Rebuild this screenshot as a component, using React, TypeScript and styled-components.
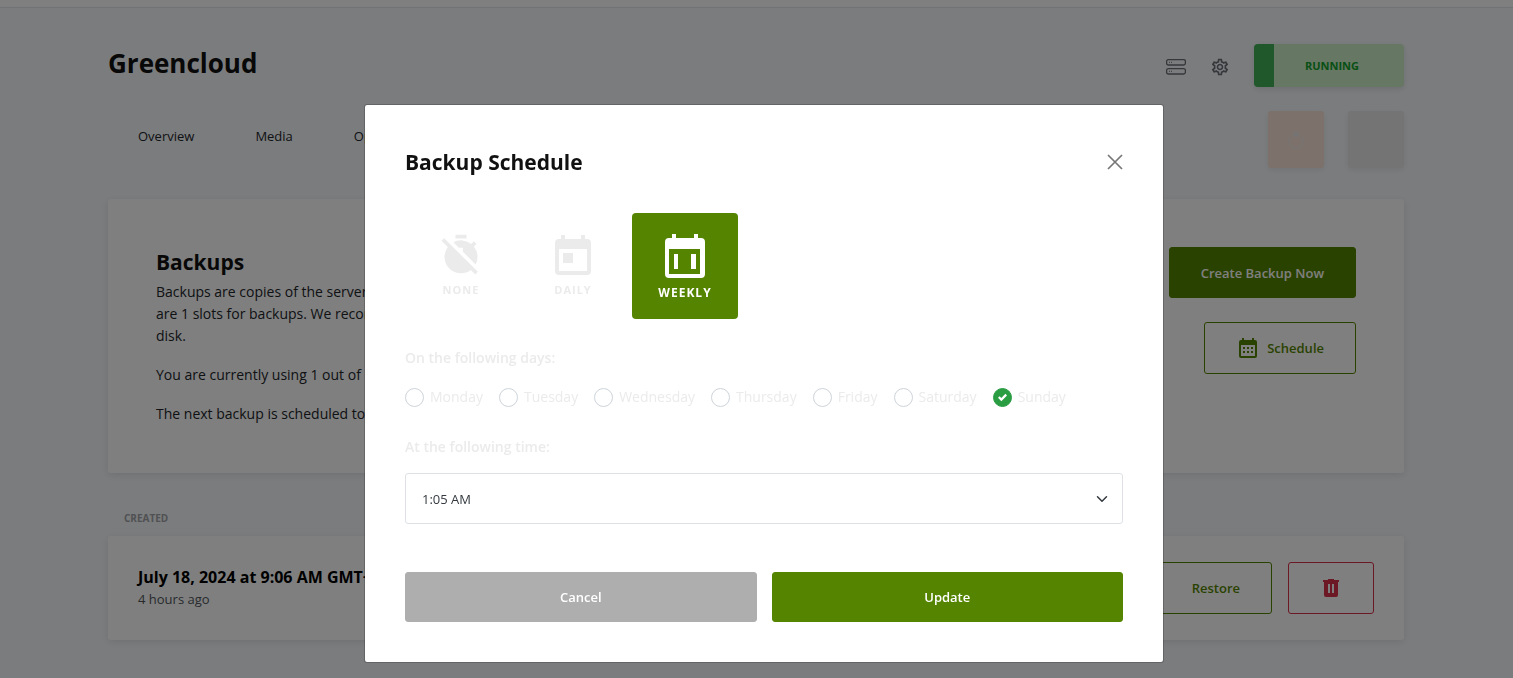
import React, { useState } from "react";
import styled, { createGlobalStyle, css } from "styled-components";
import { MdOutlineSettings, MdTimerOff } from "react-icons/md";

const GREEN = "#558500";
const RED = "#d9304a";

const GlobalStyle = createGlobalStyle`
  *, *::before, *::after { box-sizing: border-box; }
  html, body { height: 100%; }
  body {
    margin: 0;
    overflow: hidden;
    background: #f7f9fc;
    color: #212529;
    font-family: "Open Sans", "Noto Sans", sans-serif;
    font-size: 14px;
    line-height: 22px;
  }
  h1, h2, p { margin: 0; }
  button, input, select { font-family: inherit; }
`;

const TopBar = styled.div`
  height: 8px;
  background: #fff;
  border-bottom: 1px solid #e3e6ec;
`;

const Page = styled.main`
  padding: 36px 109px 0 108px;
`;

const Header = styled.header`
  display: flex;
  align-items: flex-start;
  justify-content: space-between;
`;

const ServerName = styled.h1`
  font-size: 26px;
  line-height: 38px;
  font-weight: 700;
  color: #111;
`;

const HeaderTools = styled.div`
  display: flex;
  align-items: center;
  gap: 24px;
`;

const IconButton = styled.button`
  display: flex;
  padding: 2px 0 0;
  border: 0;
  background: none;
  color: #6b6f76;
`;

const CloseButton = styled(IconButton)`
  padding: 0;
  color: #777;
`;

const StatusBadge = styled.button`
  display: flex;
  width: 150px;
  height: 43px;
  padding: 0;
  border: 0;
  border-radius: 4px;
  overflow: hidden;
  background: #cceec6;
  box-shadow: 0 2px 6px rgba(0, 0, 0, 0.12);
  color: #10a02a;
  font-size: 11px;
  font-weight: 700;
  align-items: stretch;
  &::before {
    content: "";
    width: 20px;
    background: #40b058;
  }
  span {
    flex: 1;
    line-height: 43px;
    padding-right: 14px;
  }
`;

const NavRow = styled.div`
  display: flex;
  justify-content: space-between;
  align-items: flex-start;
  height: 88px;
  margin-top: 24px;
`;

const Tabs = styled.nav`
  display: flex;
  padding: 14px 30px;
  gap: 61px;
`;

const Tab = styled.a`
  color: #212529;
  font-size: 13px;
  text-decoration: none;
`;

const Actions = styled.div`
  display: flex;
  gap: 24px;
`;

const ActionTile = styled.button<{ $tone: string }>`
  display: flex;
  align-items: center;
  justify-content: center;
  width: 56px;
  height: 57px;
  padding: 0;
  border: 0;
  border-radius: 3px;
  background: ${(p) => p.$tone};
  color: #e9e9ea;
  box-shadow: 0 2px 6px rgba(0, 0, 0, 0.08);
`;

const Card = styled.section`
  display: flex;
  justify-content: space-between;
  background: #fff;
  border-radius: 3px;
  box-shadow: 0 2px 8px rgba(0, 0, 0, 0.1);
`;

const BackupsCard = styled(Card)`
  height: 274px;
  padding: 48px;
`;

const BackupRow = styled(Card)`
  align-items: center;
  height: 104px;
  padding: 0 30px;
`;

const Info = styled.div`
  display: flex;
  flex-direction: column;
  gap: 17px;
`;

const Heading = styled.h2`
  font-size: 21px;
  line-height: 30px;
  font-weight: 700;
  color: #111;
`;

const Intro = styled.p`
  padding-top: 4px;
`;

const ButtonColumn = styled.div`
  display: flex;
  flex-direction: column;
  align-items: flex-end;
  gap: 24px;
`;

const ButtonRow = styled.div`
  display: flex;
  gap: 16px;
`;

const Button = styled.button<{ $kind: "solid" | "outline" | "danger" | "muted"; $wide?: boolean }>`
  display: flex;
  align-items: center;
  justify-content: center;
  gap: 7px;
  height: 52px;
  padding: 0 31px;
  border: 1px solid ${GREEN};
  border-radius: 3px;
  background: none;
  color: ${GREEN};
  font-size: 13px;
  font-weight: 600;
  svg { margin: 0 3px; }
  ${(p) => p.$kind === "solid" && css`height: 51px; background: ${GREEN}; color: #fff;`}
  ${(p) => p.$kind === "muted" && css`background: #aeaeae; border-color: #aeaeae; color: #fff;`}
  ${(p) => p.$kind === "danger" && css`border-color: ${RED}; color: ${RED};`}
  ${(p) => p.$wide && css`flex: 1; height: 50px;`}
`;

const ColumnLabel = styled.div`
  padding: 34px 16px 7px;
  color: #a0a2a6;
  font-size: 10px;
  font-weight: 700;
`;

const Created = styled.div`
  color: #50555a;
  font-size: 13px;
  strong {
    display: block;
    font-size: 16px;
    color: #000;
  }
`;

const Backdrop = styled.div`
  position: fixed;
  inset: 0;
  padding: 104px 0 0 15px;
  background: rgba(0, 0, 0, 0.5);
`;

const Dialog = styled.div`
  width: 800px;
  max-width: 100%;
  margin: 0 auto;
  padding: 40px;
  border: 1px solid rgba(0, 0, 0, 0.2);
  border-radius: 3px;
  background: #fff;
  background-clip: padding-box;
`;

const DialogHead = styled.div`
  display: flex;
  align-items: center;
  justify-content: space-between;
  height: 34px;
`;

const Intervals = styled.div`
  display: flex;
  gap: 6px;
  margin-top: 34px;
  padding-left: 3px;
`;

const Interval = styled.button<{ $active?: boolean }>`
  display: flex;
  flex-direction: column;
  align-items: center;
  gap: 6px;
  width: 106px;
  height: 106px;
  padding: ${(p) => (p.$active ? "21px" : "22px")} 0 0;
  border: 0;
  border-radius: 4px;
  background: ${(p) => (p.$active ? GREEN : "none")};
  color: ${(p) => (p.$active ? "#fff" : "#ebebeb")};
  font-size: ${(p) => (p.$active ? "12px" : "11px")};
  line-height: 18px;
  font-weight: 700;
  letter-spacing: 1px;
`;

const IntervalIcon = styled.span<{ $tall?: boolean }>`
  display: flex;
  align-items: center;
  height: ${(p) => (p.$tall ? "44px" : "40px")};
`;

const GroupLabel = styled.div`
  display: block;
  margin-top: 28px;
  color: #ebebeb;
  font-size: 14px;
  font-weight: 600;
`;

const Days = styled.div`
  display: flex;
  gap: 16px;
  margin-top: 17px;
`;

const Day = styled.label`
  display: flex;
  align-items: center;
  gap: 6px;
  color: #ebebeb;
`;

const DayBox = styled.input`
  appearance: none;
  width: 19px;
  height: 19px;
  margin: 0;
  border: 1px solid #ced4da;
  border-radius: 50%;
  background: #fff;
  &:checked {
    border-color: #2a9d43;
    background: #2a9d43 url("data:image/svg+xml,%3Csvg xmlns='http://www.w3.org/2000/svg' viewBox='0 0 8 8'%3E%3Cpath fill='%23fff' d='M6.564.75l-3.59 3.612-1.538-1.55L0 4.26 2.974 7.25 8 2.193z'/%3E%3C/svg%3E") center / 9px no-repeat;
  }
`;

const TimeSelect = styled.select`
  appearance: none;
  display: block;
  width: 100%;
  height: 51px;
  margin-top: 15px;
  padding: 0 16px;
  border: 1px solid #dee2e6;
  border-radius: 3px;
  color: #343a40;
  font-size: 13px;
  background: #fff url("data:image/svg+xml,%3Csvg xmlns='http://www.w3.org/2000/svg' viewBox='0 0 16 16' fill='none' stroke='%23343a40' stroke-width='2' stroke-linecap='round' stroke-linejoin='round'%3E%3Cpath d='M2 5l6 6 6-6'/%3E%3C/svg%3E") right 14px center / 12px no-repeat;
`;

const DialogActions = styled.div`
  display: flex;
  gap: 15px;
  margin-top: 48px;
`;

const ServerIcon = () => (
  <svg width="20" height="16" viewBox="0 0 20 16" fill="none" stroke="currentColor">
    <rect x="0.6" y="0.6" width="18.8" height="5.4" rx="1.8" strokeWidth="1.3" />
    <rect x="0.6" y="9.6" width="18.8" height="5.4" rx="1.8" strokeWidth="1.3" />
    <path d="M3 3.3h1M5 3.3h1M3 12.3h1M5 12.3h1" />
  </svg>
);

const RestartIcon = () => (
  <svg width="16" height="18" viewBox="0 0 16 18" fill="none" stroke="currentColor">
    <path d="M4 4.5a7 7 0 1 0 8 0" />
    <path d="M8 0.500L4.500 4H11.500zM8 3v4" fill="currentColor" />
  </svg>
);

const DailyIcon = () => (
  <svg width="36" height="40" viewBox="0 0 18 20" fill="currentColor">
    <path fillRule="evenodd" d="M16 2h-1V0h-2v2H5V0H3v2H2a2 2 0 0 0-2 2v14a2 2 0 0 0 2 2h14a2 2 0 0 0 2-2V4a2 2 0 0 0-2-2zm0 16H2V7h14zM4 9h5v5H4z" />
  </svg>
);

const WeeklyIcon = () => (
  <svg width="40" height="44" viewBox="0 0 40 44" fill="currentColor">
    <path fillRule="evenodd" d="M36 4h-3V0h-4v4H11V0H7v4H4a4 4 0 0 0-4 4v32a4 4 0 0 0 4 4h32a4 4 0 0 0 4-4V8a4 4 0 0 0-4-4zm-1 36H4V15h31zM9 20h4v15H9zM26 20h5v15h-5z" />
  </svg>
);

const ScheduleIcon = () => (
  <svg width="18" height="20" viewBox="0 0 18 20" fill="currentColor">
    <path fillRule="evenodd" d="M16 2h-1V0h-2v2H5V0H3v2H2a2 2 0 0 0-2 2v14a2 2 0 0 0 2 2h14a2 2 0 0 0 2-2V4a2 2 0 0 0-2-2zm0 16H2V7h14zM4 9h2v2H4zM8 9h2v2H8zM12 9h2v2h-2zM4 13h2v2H4zM8 13h2v2H8zM12 13h2v2h-2z" />
  </svg>
);

const TrashIcon = () => (
  <svg width="16" height="18" viewBox="0 0 16 18" fill="currentColor">
    <path fillRule="evenodd" d="M0 1h5V0h6v1h5v2h-1v13a2 2 0 0 1-2 2H3a2 2 0 0 1-2-2V3H0zM5 5h2v9H5zM9 5h2v9H9z" />
  </svg>
);

const CloseIcon = () => (
  <svg width="16" height="16" viewBox="0 0 16 16" fill="none" stroke="currentColor" strokeWidth="1.7">
    <path d="M1 1l14 14M15 1L1 15" />
  </svg>
);

const WEEK = ["Monday", "Tuesday", "Wednesday", "Thursday", "Friday", "Saturday", "Sunday"];

export default function App() {
  const [days, setDays] = useState<string[]>(["Sunday"]);
  const toggle = (day: string) =>
    setDays((now) => (now.includes(day) ? now.filter((d) => d !== day) : [...now, day]));

  return (
    <>
      <GlobalStyle />
      <TopBar />
      <Page>
        <Header>
          <ServerName>Greencloud</ServerName>
          <HeaderTools>
            <IconButton aria-label="Console"><ServerIcon /></IconButton>
            <IconButton aria-label="Settings"><MdOutlineSettings size={20} /></IconButton>
            <StatusBadge><span>RUNNING</span></StatusBadge>
          </HeaderTools>
        </Header>
        <NavRow>
          <Tabs>
            <Tab href="#overview">Overview</Tab>
            <Tab href="#media">Media</Tab>
            <Tab href="#options">Options</Tab>
          </Tabs>
          <Actions>
            <ActionTile $tone="#f8e2d6" aria-label="Restart"><RestartIcon /></ActionTile>
            <ActionTile $tone="#e9e9e9" aria-label="Stop" />
          </Actions>
        </NavRow>
        <BackupsCard>
          <Info>
            <div>
              <Heading>Backups</Heading>
              <Intro>
                Backups are copies of the server disk. There
                <br />
                are 1 slots for backups. We recommend a free
                <br />
                disk.
              </Intro>
            </div>
            <p>You are currently using 1 out of 1 slots.</p>
            <p>The next backup is scheduled to run on Sunday.</p>
          </Info>
          <ButtonColumn>
            <Button $kind="solid">Create Backup Now</Button>
            <Button $kind="outline"><ScheduleIcon />Schedule</Button>
          </ButtonColumn>
        </BackupsCard>
        <ColumnLabel>CREATED</ColumnLabel>
        <BackupRow>
          <Created>
            <strong>July 18, 2024 at 9:06 AM GMT+2</strong>
            4 hours ago
          </Created>
          <ButtonRow>
            <Button $kind="outline">Restore</Button>
            <Button $kind="danger" aria-label="Delete"><TrashIcon /></Button>
          </ButtonRow>
        </BackupRow>
      </Page>
      <Backdrop>
        <Dialog role="dialog" aria-labelledby="dialog-title">
          <DialogHead>
            <Heading id="dialog-title">Backup Schedule</Heading>
            <CloseButton aria-label="Close"><CloseIcon /></CloseButton>
          </DialogHead>
          <Intervals>
            <Interval><IntervalIcon><MdTimerOff size={44} /></IntervalIcon>NONE</Interval>
            <Interval><IntervalIcon><DailyIcon /></IntervalIcon>DAILY</Interval>
            <Interval $active><IntervalIcon $tall><WeeklyIcon /></IntervalIcon>WEEKLY</Interval>
          </Intervals>
          <GroupLabel>On the following days:</GroupLabel>
          <Days>
            {WEEK.map((day) => (
              <Day key={day}>
                <DayBox type="checkbox" checked={days.includes(day)} onChange={() => toggle(day)} />
                {day}
              </Day>
            ))}
          </Days>
          <GroupLabel as="label" htmlFor="backup-time">At the following time:</GroupLabel>
          <TimeSelect id="backup-time" defaultValue="1:05 AM">
            <option>1:05 AM</option>
          </TimeSelect>
          <DialogActions>
            <Button $kind="muted" $wide>Cancel</Button>
            <Button $kind="solid" $wide>Update</Button>
          </DialogActions>
        </Dialog>
      </Backdrop>
    </>
  );
}
